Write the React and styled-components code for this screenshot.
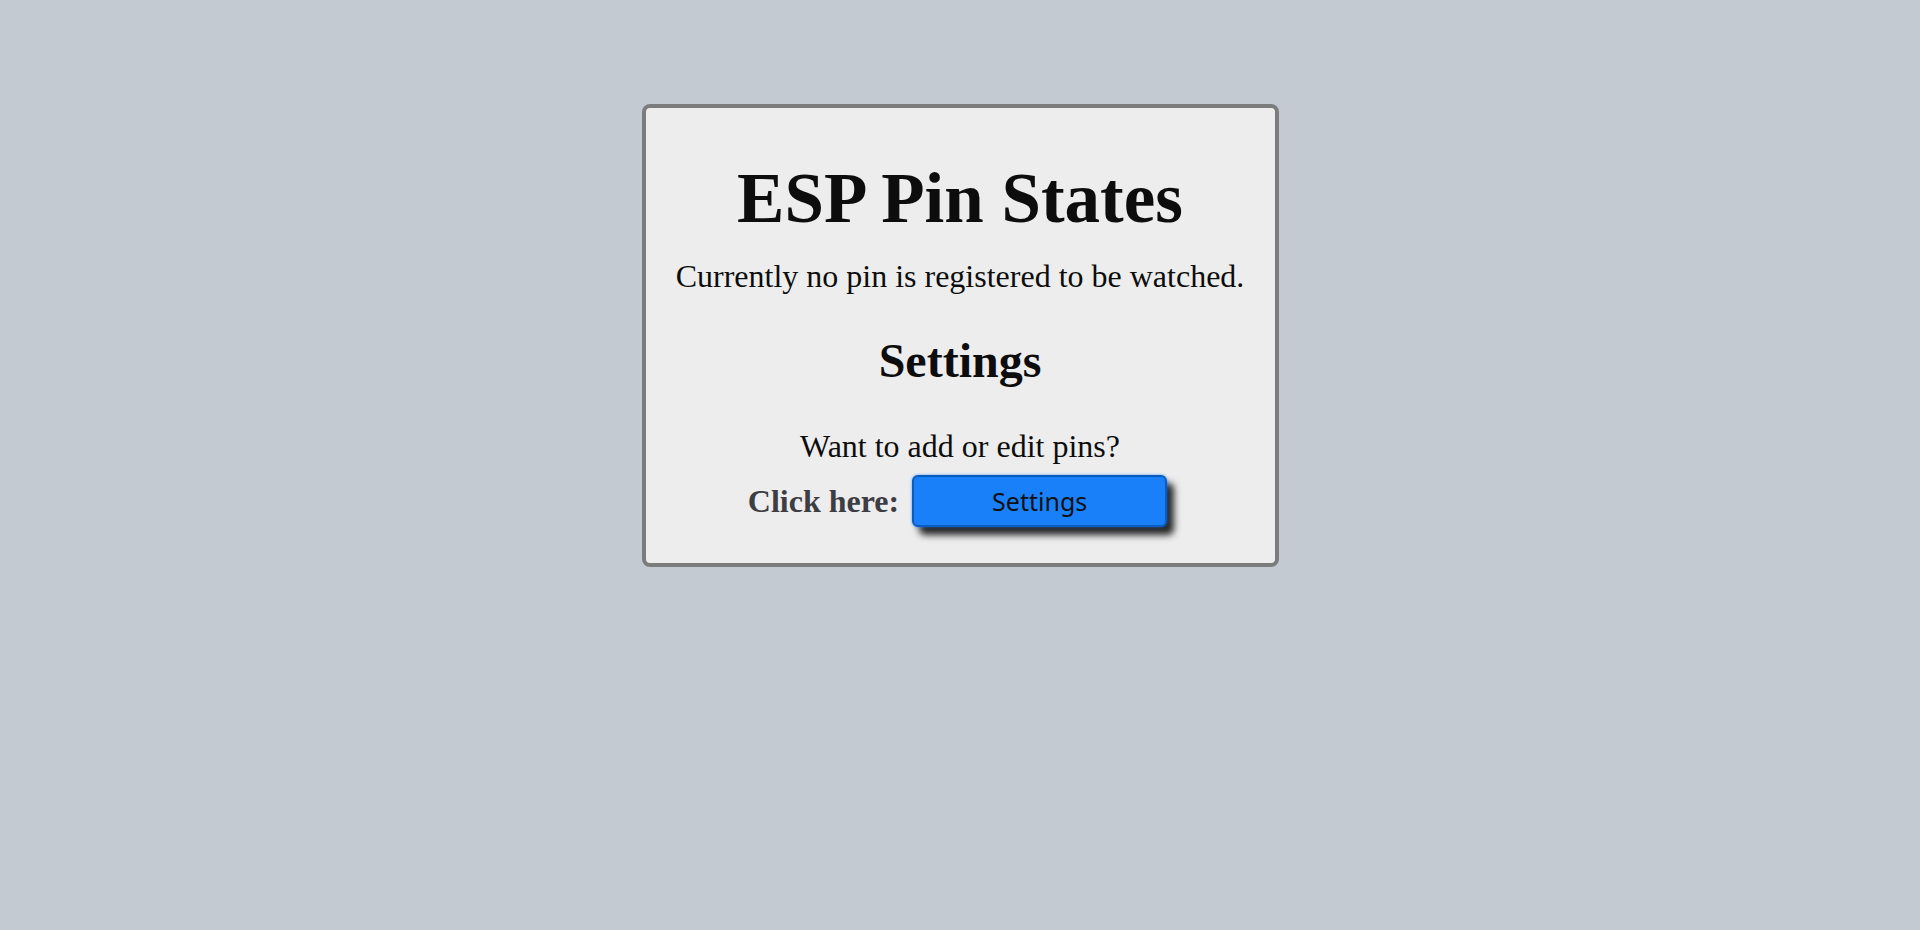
import React from "react";
import styled, { createGlobalStyle } from "styled-components";

const GlobalStyle = createGlobalStyle`
 html, body {
  margin: 0;
  padding: 0;
  background: #c3cad2;
  font-family: "Liberation Serif", "Times New Roman", serif;
 }
`;

const Page = styled.div`
 min-height: 930px;
 display: flex;
 justify-content: center;
 align-items: flex-start;
 padding-top: 104px;
 box-sizing: border-box;
`;

const Card = styled.div`
 width: 637px;
 box-sizing: border-box;
 background: #ededed;
 border: 4px solid #7c7c7c;
 border-radius: 8px;
 padding: 50px 20px 36px;
 display: flex;
 flex-direction: column;
 align-items: center;
 text-align: center;
 color: #0d0d0d;
`;

const Title = styled.h1`
 margin: 0;
 font-size: 71px;
 font-weight: bold;
 line-height: normal;
`;

const Text = styled.p`
 margin: ${(p) => p.top || 0}px 0 0;
 font-size: 32px;
 line-height: normal;
`;

const SubTitle = styled.h2`
 margin: 38px 0 0;
 font-size: 48px;
 font-weight: bold;
 line-height: normal;
`;

const ClickRow = styled.div`
 margin-top: 10px;
 padding-right: 5px;
 display: flex;
 align-items: center;
 gap: 13px;
`;

const ClickLabel = styled.span`
 font-size: 32px;
 font-weight: bold;
 color: #3d3d44;
`;

const SettingsButton = styled.button`
 width: 255px;
 height: 52px;
 box-sizing: border-box;
 background: #1a80f9;
 border: 2px solid #0b5cbf;
 border-radius: 6px;
 color: #111;
 font-family: "Noto Sans", "Open Sans", sans-serif;
 font-size: 25px;
 cursor: pointer;
 box-shadow: 0 0 3px rgba(26, 128, 249, 0.7), 7px 8px 7px #262626;
`;

export default function App() {
 return (
  <>
   <GlobalStyle />
   <Page>
    <Card>
     <Title>ESP Pin States</Title>
     <Text top={19}>Currently no pin is registered to be watched.</Text>
     <SubTitle>Settings</SubTitle>
     <Text top={40}>Want to add or edit pins?</Text>
     <ClickRow>
      <ClickLabel>Click here:</ClickLabel>
      <SettingsButton>Settings</SettingsButton>
     </ClickRow>
    </Card>
   </Page>
  </>
 );
}
